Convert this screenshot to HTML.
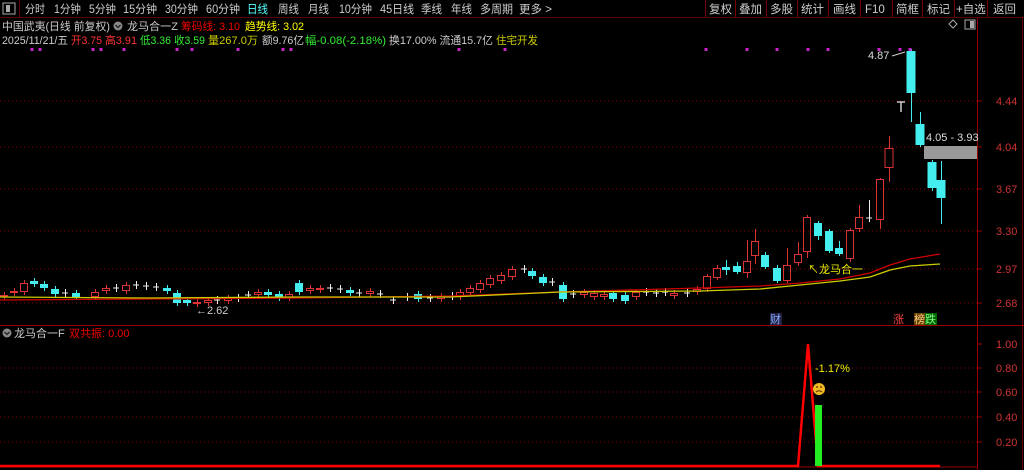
<!DOCTYPE html>
<html><head><meta charset="utf-8"><style>
html,body{margin:0;padding:0;background:#000;width:1024px;height:470px;overflow:hidden;font-family:"Liberation Sans","Noto Sans CJK SC",sans-serif;}
svg{display:block}
text{font-family:"Liberation Sans","Noto Sans CJK SC",sans-serif;}
</style></head><body>
<svg id="s" width="1024" height="470" xmlns="http://www.w3.org/2000/svg">
<rect width="1024" height="470" fill="#000"/>
<line x1="0" y1="17.5" x2="1024" y2="17.5" stroke="#5a0000"/>
<rect x="3" y="3" width="12" height="11" fill="none" stroke="#aaa"/><rect x="6" y="5" width="4" height="7" fill="#aaa"/>
<line x1="19.5" y1="0" x2="19.5" y2="17" stroke="#600"/>
<g font-size="11.5" fill="#ccc">
<text x="25" y="13" textLength="20" lengthAdjust="spacingAndGlyphs">分时</text>
<text x="54" y="13" textLength="27" lengthAdjust="spacingAndGlyphs">1分钟</text>
<text x="89" y="13" textLength="27" lengthAdjust="spacingAndGlyphs">5分钟</text>
<text x="123" y="13" textLength="34" lengthAdjust="spacingAndGlyphs">15分钟</text>
<text x="165" y="13" textLength="33" lengthAdjust="spacingAndGlyphs">30分钟</text>
<text x="206" y="13" textLength="34" lengthAdjust="spacingAndGlyphs">60分钟</text>
<text x="247" y="13" fill="#5ff" textLength="21" lengthAdjust="spacingAndGlyphs">日线</text>
<text x="278" y="13" textLength="21" lengthAdjust="spacingAndGlyphs">周线</text>
<text x="308" y="13" textLength="21" lengthAdjust="spacingAndGlyphs">月线</text>
<text x="339" y="13" textLength="33" lengthAdjust="spacingAndGlyphs">10分钟</text>
<text x="380" y="13" textLength="34" lengthAdjust="spacingAndGlyphs">45日线</text>
<text x="421" y="13" textLength="21" lengthAdjust="spacingAndGlyphs">季线</text>
<text x="451" y="13" textLength="21" lengthAdjust="spacingAndGlyphs">年线</text>
<text x="480" y="13" textLength="33" lengthAdjust="spacingAndGlyphs">多周期</text>
<text x="519" y="13">更多 &gt;</text>
</g>
<g stroke="#700"><line x1="705.5" y1="0" x2="705.5" y2="17"/><line x1="735.5" y1="0" x2="735.5" y2="17"/><line x1="766.5" y1="0" x2="766.5" y2="17"/><line x1="797.5" y1="0" x2="797.5" y2="17"/><line x1="828.5" y1="0" x2="828.5" y2="17"/><line x1="860.5" y1="0" x2="860.5" y2="17"/><line x1="892.5" y1="0" x2="892.5" y2="17"/><line x1="922.5" y1="0" x2="922.5" y2="17"/><line x1="954.5" y1="0" x2="954.5" y2="17"/><line x1="987.5" y1="0" x2="987.5" y2="17"/></g>
<g font-size="11.5" fill="#ccc">
<text x="709" y="13">复权</text><text x="739" y="13">叠加</text><text x="770" y="13">多股</text><text x="801" y="13">统计</text><text x="833" y="13">画线</text><text x="865" y="13">F10</text><text x="896" y="13">简框</text><text x="927" y="13">标记</text><text x="956" y="13">+自选</text><text x="993" y="13">返回</text>
</g>
<g font-size="11">
<text x="2" y="30" fill="#ccc" textLength="108" lengthAdjust="spacingAndGlyphs">中国武夷(日线 前复权)</text>
<circle cx="118" cy="26" r="4.5" fill="#888"/><path d="M115.5 25 L118 27.5 L120.5 25" stroke="#222" fill="none" stroke-width="1.3"/>
<text x="127" y="30" fill="#ccc" textLength="51" lengthAdjust="spacingAndGlyphs">龙马合一Z</text>
<text x="181" y="30" fill="#e00" textLength="59" lengthAdjust="spacingAndGlyphs">筹码线: 3.10</text>
<text x="245" y="30" fill="#ff0" textLength="59" lengthAdjust="spacingAndGlyphs">趋势线: 3.02</text>
<text x="2" y="44" fill="#ccc" textLength="66" lengthAdjust="spacingAndGlyphs">2025/11/21/五</text>
<text x="71" y="44" fill="#f33" textLength="31" lengthAdjust="spacingAndGlyphs">开3.75</text>
<text x="105" y="44" fill="#f33" textLength="32" lengthAdjust="spacingAndGlyphs">高3.91</text>
<text x="140" y="44" fill="#3e3" textLength="31" lengthAdjust="spacingAndGlyphs">低3.36</text>
<text x="174" y="44" fill="#3e3" textLength="31" lengthAdjust="spacingAndGlyphs">收3.59</text>
<text x="208" y="44" fill="#cc0" textLength="50" lengthAdjust="spacingAndGlyphs">量267.0万</text>
<text x="262" y="44" fill="#ccc" textLength="42" lengthAdjust="spacingAndGlyphs">额9.76亿</text>
<text x="305" y="44" fill="#3e3" textLength="81" lengthAdjust="spacingAndGlyphs">幅-0.08(-2.18%)</text>
<text x="389" y="44" fill="#ccc" textLength="104" lengthAdjust="spacingAndGlyphs">换17.00% 流通15.7亿</text>
<text x="496" y="44" fill="#cc0" textLength="42" lengthAdjust="spacingAndGlyphs">住宅开发</text>
</g>
<path d="M949 24 L953 20 L957 24 L953 28 Z" stroke="#aaa" fill="none"/>
<rect x="965" y="20" width="10" height="9" fill="none" stroke="#aaa"/><rect x="970" y="21" width="4" height="7" fill="#aaa"/>
<line x1="977.5" y1="18" x2="977.5" y2="470" stroke="#900"/>
<line x1="1022.5" y1="18" x2="1022.5" y2="470" stroke="#600"/>
<line x1="0" y1="325.5" x2="1024" y2="325.5" stroke="#900"/>
<line x1="0" y1="467" x2="977" y2="467" stroke="#900"/>
<g stroke="#800" stroke-dasharray="1,3">
<line x1="0" y1="101" x2="977" y2="101"/><line x1="0" y1="147" x2="977" y2="147"/><line x1="0" y1="189" x2="977" y2="189"/><line x1="0" y1="231" x2="977" y2="231"/><line x1="0" y1="269" x2="977" y2="269"/><line x1="0" y1="303" x2="977" y2="303"/>
<line x1="0" y1="368" x2="977" y2="368"/><line x1="0" y1="392" x2="977" y2="392"/><line x1="0" y1="417" x2="977" y2="417"/><line x1="0" y1="442" x2="977" y2="442"/>
</g>
<g stroke="#900"><line x1="977" y1="101" x2="982" y2="101"/><line x1="977" y1="147" x2="982" y2="147"/><line x1="977" y1="189" x2="982" y2="189"/><line x1="977" y1="231" x2="982" y2="231"/><line x1="977" y1="269" x2="982" y2="269"/><line x1="977" y1="303" x2="982" y2="303"/><line x1="977" y1="344" x2="982" y2="344"/><line x1="977" y1="368" x2="982" y2="368"/><line x1="977" y1="392" x2="982" y2="392"/><line x1="977" y1="417" x2="982" y2="417"/><line x1="977" y1="442" x2="982" y2="442"/></g>
<g font-size="11" fill="#c33">
<text x="996" y="105">4.44</text><text x="996" y="151">4.04</text><text x="996" y="193">3.67</text><text x="996" y="235">3.30</text><text x="996" y="273">2.97</text><text x="996" y="307">2.68</text>
<text x="996" y="348">1.00</text><text x="996" y="372">0.80</text><text x="996" y="396">0.60</text><text x="996" y="421">0.40</text><text x="996" y="446">0.20</text>
</g>
<g id="c"></g>
<polyline fill="none" stroke="#c00" stroke-width="1.3" points="0,300 150,299 300,298 450,296 560,292 700,288 760,286 800,283 840,279 870,273 890,265 910,259 940,254"/>
<polyline fill="none" stroke="#cc0" stroke-width="1.3" points="0,297 150,298 300,297 450,297 560,292 700,291 760,289 800,285 840,281 870,277 890,270 910,266 940,264"/>
<rect x="924" y="146" width="53" height="13" fill="#999"/>
<text x="926" y="141" font-size="11" fill="#ddd">4.05 - 3.93</text>
<text x="868" y="59" font-size="11" fill="#ddd">4.87</text>
<line x1="892" y1="56" x2="905" y2="52" stroke="#ccc"/>
<path d="M897 102 H905 M901 102 V112" stroke="#ccc" stroke-width="1.5"/>
<text x="808" y="273" font-size="11" fill="#ee0">↖龙马合一</text>
<text x="196" y="314" font-size="11" fill="#ccc">←2.62</text>
<rect x="770" y="313" width="12" height="12" fill="#224"/><text x="770" y="323" font-size="11" fill="#8af">财</text>
<text x="893" y="323" font-size="11" fill="#f44">涨</text>
<rect x="914" y="313" width="11" height="12" fill="#640"/><text x="914" y="323" font-size="11" fill="#fc8">榜</text>
<rect x="925" y="313" width="12" height="12" fill="#060"/><text x="925" y="323" font-size="11" fill="#8f8">跌</text>
<circle cx="7" cy="333" r="4.5" fill="#888"/><path d="M4.5 332 L7 334.5 L9.5 332" stroke="#222" fill="none" stroke-width="1.3"/>
<text x="14" y="337" font-size="11" fill="#ccc">龙马合一F</text>
<text x="69" y="337" font-size="11" fill="#e00">双共振: 0.00</text>
<polyline fill="none" stroke="#f00" stroke-width="2.5" points="0,466 798,466 808,344 818,466 940,466"/>
<rect x="815" y="405" width="7" height="61" fill="#2e2"/>
<text x="815" y="372" font-size="11" fill="#ee0">-1.17%</text>
<circle cx="819" cy="389" r="6" fill="#eb2"/>
<circle cx="817" cy="387" r="0.9" fill="#520"/><circle cx="821" cy="387" r="0.9" fill="#520"/>
<path d="M816 392 Q819 389.5 822 392" stroke="#520" fill="none"/>
</svg>
<script>
var d=[[4,'r',295,297],[14,'r',291,293],[24,'r',283,292],[34,'c',281,284],[44,'c',284,288],[55,'c',289,294],[65,'w',293],[76,'c',293,297],[95,'r',292,297],[106,'r',288,291],[116,'w',288],[126,'r',285,291],[136,'w',285],[146,'w',286],[156,'w',287],[167,'c',288,291],[177,'c',293,303],[187,'c',300,303],[197,'r',302,304],[208,'r',300,303],[217,'w',300],[228,'r',298,301],[238,'w',298],[248,'w',295],[258,'r',292,295],[268,'c',292,295],[279,'c',294,298],[289,'r',294,298],[299,'c',283,292],[310,'r',288,291],[320,'r',288,290],[330,'w',288],[340,'w',289],[350,'c',290,293],[359,'w',293],[370,'r',291,294],[380,'w',294],[393,'w',300],[407,'w',297],[418,'c',294,299],[430,'w',298],[441,'r',296,299],[452,'w',296],[460,'r',292,297],[470,'r',288,293],[480,'r',283,290],[490,'r',278,285],[501,'r',275,281],[512,'r',269,277],[524,'w',269],[532,'c',271,276],[543,'c',277,283],[552,'w',282],[563,'c',285,299],[573,'w',294],[584,'r',292,295],[594,'r',293,297],[604,'r',294,297],[613,'c',293,299],[625,'c',295,301],[636,'r',292,297],[646,'w',292],[656,'w',293],[665,'w',292],[674,'r',293,296],[687,'w',293],[697,'r',289,292],[707,'r',276,289,274,292],[717,'r',268,278,265,280],[726,'c',267,270,260,275],[737,'c',266,272,262,274],[747,'r',261,273,240,278],[755,'r',241,256,229,264],[765,'c',255,267,252,269],[777,'c',268,281,265,283],[787,'r',265,281,248,283],[798,'r',254,263,242,266],[807,'r',217,252,215,258],[818,'c',223,236,221,240],[829,'c',231,251,229,253],[839,'c',248,254,241,256],[850,'r',230,259,228,262],[859,'r',217,229,205,232],[869,'w',218,218,200,222],[880,'r',179,220,178,229],[889,'r',148,168,136,182],[911,'c',51,93,49,122],[920,'c',124,145,112,147],[932,'c',162,188,160,191],[941,'c',180,198,161,224]];
var h='';
d.forEach(function(e){var x=e[0],t=e[1];
if(t=='w'){var y=e[2],hi=e[4]||y-4,lo=e[5]||y+4;h+='<line x1="'+(x-3)+'" y1="'+y+'" x2="'+(x+3)+'" y2="'+y+'" stroke="#eee"/><line x1="'+(x+.5)+'" y1="'+hi+'" x2="'+(x+.5)+'" y2="'+lo+'" stroke="#eee"/>';return;}
var a=e[2],b=e[3],hi=e[4]||a-3,lo=e[5]||b+3,w=(x>880?9:8);
if(t=='c'){h+='<line x1="'+(x+.5)+'" y1="'+hi+'" x2="'+(x+.5)+'" y2="'+lo+'" stroke="#4ee"/><rect x="'+(x-w/2)+'" y="'+a+'" width="'+w+'" height="'+Math.max(1,b-a)+'" fill="#4ee"/>';}
else{h+='<line x1="'+(x+.5)+'" y1="'+hi+'" x2="'+(x+.5)+'" y2="'+a+'" stroke="#d33"/><line x1="'+(x+.5)+'" y1="'+b+'" x2="'+(x+.5)+'" y2="'+lo+'" stroke="#d33"/><rect x="'+(x-w/2+.5)+'" y="'+(a+.5)+'" width="'+(w-1)+'" height="'+Math.max(1,b-a-1)+'" fill="none" stroke="#d33"/>';}
});
[32,40,93,101,124,177,192,238,283,291,459,505,706,747,777,808,828,879,900,910].forEach(function(x){h+='<rect x="'+(x-1.5)+'" y="48" width="3" height="3" fill="#c2c"/>';});
document.getElementById('c').innerHTML=h;
</script>
</body></html>
